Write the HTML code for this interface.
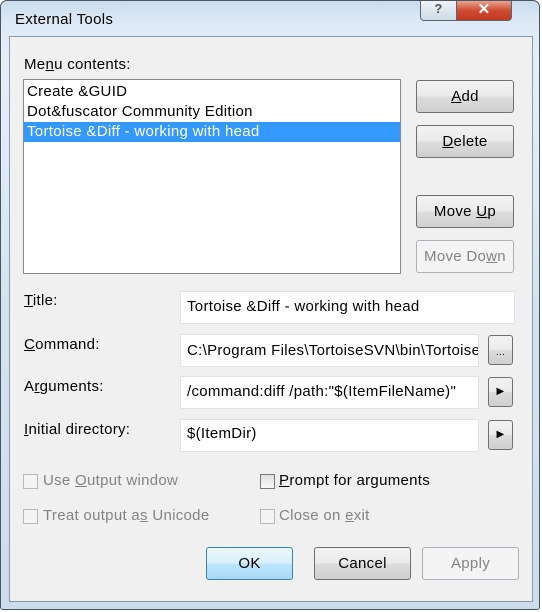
<!DOCTYPE html>
<html><head><style>
*{margin:0;padding:0;box-sizing:border-box}
body{width:542px;height:612px;background:#fff;position:relative;overflow:hidden;font-family:"Liberation Sans",sans-serif;font-size:15px;letter-spacing:0.3px;color:#000}
.win{position:absolute;left:0;top:0;width:540px;height:610px;border:1px solid #4a5560;border-radius:7px 7px 3px 3px;background:linear-gradient(180deg,#c9dced 0,#dce9f5 20px,#e6eff8 60px,#d5e3f0 300px,#ccdcec 610px)}
.client{position:absolute;left:8px;top:35px;width:524px;height:566px;background:#f0f0f0;border:1px solid #8a99a8}
.a{position:absolute}
.title{left:14px;top:10px;font-size:15px}
.cap{position:absolute;top:0;height:20px;border:1px solid #5a6672;border-top:none}
.btn{position:absolute;border:1px solid #707070;border-radius:3px;background:linear-gradient(#f2f2f2 0,#ebebeb 50%,#dddddd 50%,#cfcfcf);text-align:center;font-size:15px}
.dis{border-color:#adb2b5;background:#f4f4f4;color:#838383}
.field{position:absolute;background:#fff;border:1px solid #dfe3e8;padding-left:6px;font-size:15px;white-space:nowrap;overflow:hidden}
.cb{position:absolute;width:15px;height:15px;border:1px solid #b8b8b8;background:#f4f4f4}
.lbl{position:absolute;font-size:15px}
u{text-decoration:underline}
</style></head><body>
<div class="win">
<div class="a title">External Tools</div>
<div class="cap" style="left:419px;width:37px;border-radius:0 0 0 4px;background:linear-gradient(#eef3f8,#cfdbe7);text-align:center;color:#555;font-weight:bold;font-size:13px">?</div>
<div class="cap" style="left:455px;width:56px;border-radius:0 0 4px 0;background:linear-gradient(#e8a593,#cf4a30 50%,#c03a20);color:#fff;text-align:center;font-weight:bold;font-size:15px;line-height:18px">✕</div>
<div class="client"></div>
</div>
<div class="lbl" style="left:24px;top:56px">Me<u>n</u>u contents:</div>
<div class="a" style="left:23px;top:79px;width:378px;height:195px;background:#fff;border:1px solid #828790">
<div style="padding-left:3px;line-height:20px;height:20px;margin-top:2px">Create &amp;GUID</div>
<div style="padding-left:3px;line-height:20px;height:20px">Dot&amp;fuscator Community Edition</div>
<div style="padding-left:3px;line-height:20px;height:20px;background:#3399ff;color:#fff">Tortoise &amp;Diff - working with head</div>
</div>
<div class="btn" style="left:416px;top:80px;width:98px;height:33px;line-height:31px"><u>A</u>dd</div>
<div class="btn" style="left:416px;top:125px;width:98px;height:33px;line-height:31px"><u>D</u>elete</div>
<div class="btn" style="left:416px;top:195px;width:98px;height:33px;line-height:31px">Move <u>U</u>p</div>
<div class="btn dis" style="left:416px;top:240px;width:98px;height:33px;line-height:31px">Move Do<u>w</u>n</div>
<div class="lbl" style="left:24px;top:292px"><u>T</u>itle:</div>
<div class="lbl" style="left:24px;top:336px"><u>C</u>ommand:</div>
<div class="lbl" style="left:24px;top:378px">A<u>r</u>guments:</div>
<div class="lbl" style="left:24px;top:421px"><u>I</u>nitial directory:</div>
<div class="field" style="left:180px;top:291px;width:335px;height:33px;line-height:29px">Tortoise &amp;Diff - working with head</div>
<div class="field" style="left:180px;top:334px;width:299px;height:33px;line-height:31px">C:\Program Files\TortoiseSVN\bin\TortoiseP</div>
<div class="field" style="left:180px;top:376px;width:299px;height:33px;line-height:29px">/command:diff /path:"$(ItemFileName)"</div>
<div class="field" style="left:180px;top:419px;width:299px;height:33px;line-height:27px">$(ItemDir)</div>
<div class="btn" style="left:488px;top:335px;width:25px;height:30px;line-height:34px;font-size:10px">...</div>
<div class="btn" style="left:488px;top:377px;width:25px;height:30px;line-height:28px;font-size:10px">▶</div>
<div class="btn" style="left:488px;top:420px;width:25px;height:30px;line-height:28px;font-size:10px">▶</div>
<div class="cb" style="left:23px;top:474px"></div>
<div class="lbl" style="left:43px;top:472px;color:#838383">Use <u>O</u>utput window</div>
<div class="cb" style="left:23px;top:509px"></div>
<div class="lbl" style="left:43px;top:507px;color:#838383">Treat output a<u>s</u> Unicode</div>
<div class="cb" style="left:260px;top:474px;border-color:#777;background:linear-gradient(#e0e0e0,#f8f8f8)"></div>
<div class="lbl" style="left:279px;top:472px"><u>P</u>rompt for arguments</div>
<div class="cb" style="left:260px;top:509px"></div>
<div class="lbl" style="left:279px;top:507px;color:#838383">Close on <u>e</u>xit</div>
<div class="btn" style="left:206px;top:547px;width:87px;height:33px;line-height:31px;border-color:#3c7fb1;background:linear-gradient(#eaf6fd 0,#d9f0fc 50%,#bee6fd 50%,#a7d9f5)">OK</div>
<div class="btn" style="left:314px;top:547px;width:97px;height:33px;line-height:31px">Cancel</div>
<div class="btn dis" style="left:422px;top:547px;width:97px;height:33px;line-height:31px">Apply</div>
</body></html>
